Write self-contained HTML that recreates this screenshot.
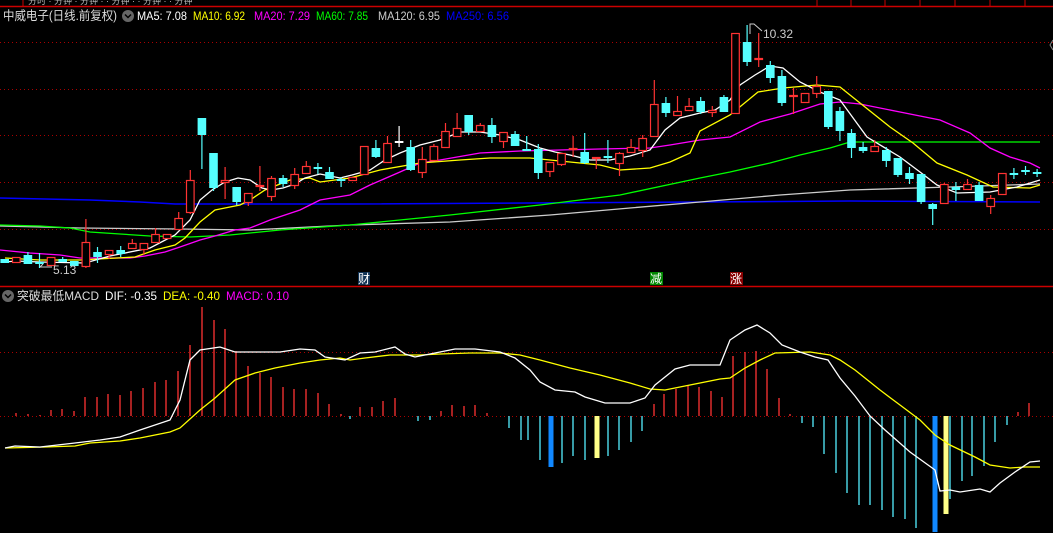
<!DOCTYPE html>
<html><head><meta charset="utf-8"><style>
html,body{margin:0;padding:0;background:#000;width:1053px;height:533px;overflow:hidden}
svg{display:block}
text{font-family:"Liberation Sans","Noto Sans CJK SC",sans-serif}
</style></head><body>
<svg id="s" width="1053" height="533" viewBox="0 0 1053 533" xmlns="http://www.w3.org/2000/svg">
<rect width="1053" height="533" fill="#000"/>
<g fill="#bbb" font-size="9"><text x="28" y="4">分时 · 分钟 · 分钟 · · 分钟 · · 分钟 · · 分钟</text></g>
<line x1="0" y1="6.5" x2="1053" y2="6.5" stroke="#c00" stroke-width="1.5"/>
<g stroke="#c00" stroke-width="1"><line x1="23" y1="0" x2="23" y2="6"/><line x1="817" y1="0" x2="817" y2="6"/><line x1="851" y1="0" x2="851" y2="6"/><line x1="885" y1="0" x2="885" y2="6"/><line x1="920" y1="0" x2="920" y2="6"/><line x1="955" y1="0" x2="955" y2="6"/><line x1="990" y1="0" x2="990" y2="6"/><line x1="1025" y1="0" x2="1025" y2="6"/></g>
<g stroke="#a00" stroke-width="1" stroke-dasharray="1,3">
<line x1="0" y1="42.5" x2="1053" y2="42.5"/><line x1="0" y1="89.5" x2="1053" y2="89.5"/><line x1="0" y1="135.5" x2="1053" y2="135.5"/><line x1="0" y1="182.5" x2="1053" y2="182.5"/><line x1="0" y1="229.5" x2="1053" y2="229.5"/>
<line x1="0" y1="352.5" x2="1053" y2="352.5"/><line x1="0" y1="416.5" x2="1053" y2="416.5"/>
</g>
<line x1="0" y1="286.5" x2="1053" y2="286.5" stroke="#c00" stroke-width="1.5"/>
<g id="ma"></g>
<g id="cd"></g>
<g id="mh"></g>
<g id="ml"></g>
<text x="3" y="20" font-size="12.5" fill="#ddd" textLength="114" lengthAdjust="spacingAndGlyphs">中威电子(日线.前复权)</text>
<circle cx="128" cy="16" r="6" fill="#666"/><path d="M125 14.5 L128 17.5 L131 14.5" stroke="#000" stroke-width="1.5" fill="none"/>
<g font-size="12">
<text x="137" y="20" fill="#fff" textLength="50" lengthAdjust="spacingAndGlyphs">MA5: 7.08</text>
<text x="193" y="20" fill="#ff0" textLength="52" lengthAdjust="spacingAndGlyphs">MA10: 6.92</text>
<text x="254" y="20" fill="#f0f" textLength="56" lengthAdjust="spacingAndGlyphs">MA20: 7.29</text>
<text x="316" y="20" fill="#0f0" textLength="52" lengthAdjust="spacingAndGlyphs">MA60: 7.85</text>
<text x="378" y="20" fill="#ccc" textLength="62" lengthAdjust="spacingAndGlyphs">MA120: 6.95</text>
<text x="446" y="20" fill="#00f" textLength="63" lengthAdjust="spacingAndGlyphs">MA250: 6.56</text>
</g>
<text x="763" y="38" font-size="12" fill="#ccc">10.32</text>
<path d="M750 34 V24 H754 L762 31" stroke="#ccc" fill="none"/>
<text x="53" y="274" font-size="12" fill="#ccc">5.13</text>
<path d="M40 267 H52 M40 267 L43 264" stroke="#ccc" fill="none"/>
<rect x="358" y="272" width="12" height="13" fill="#135"/><text x="358" y="283" font-size="12" fill="#fff">财</text>
<rect x="650" y="272" width="13" height="13" fill="#080"/><text x="650" y="283" font-size="12" fill="#fff">减</text>
<rect x="730" y="272" width="13" height="13" fill="#800"/><text x="730" y="283" font-size="12" fill="#fff">涨</text>
<circle cx="8" cy="296" r="6" fill="#666"/><path d="M5 294.5 L8 297.5 L11 294.5" stroke="#000" stroke-width="1.5" fill="none"/>
<g font-size="12"><text x="17" y="300" fill="#ddd" textLength="82" lengthAdjust="spacingAndGlyphs">突破最低MACD</text>
<text x="105" y="300" fill="#fff" textLength="52" lengthAdjust="spacingAndGlyphs">DIF: -0.35</text>
<text x="163" y="300" fill="#ff0" textLength="57" lengthAdjust="spacingAndGlyphs">DEA: -0.40</text>
<text x="226" y="300" fill="#f0f" textLength="63" lengthAdjust="spacingAndGlyphs">MACD: 0.10</text></g>
<path d="M1053 40 L1050 45 L1053 50" stroke="#888" fill="none"/>
</svg>
<script>
var NS="http://www.w3.org/2000/svg";
function el(p,t,a){var e=document.createElementNS(NS,t);for(var k in a)e.setAttribute(k,a[k]);document.getElementById(p).appendChild(e);return e;}
function pl(p,pts,c,w){el(p,"polyline",{points:pts.map(function(q){return q.join(",")}).join(" "),fill:"none",stroke:c,"stroke-width":w||1.2});}
pl("ma",[[0,198],[45,199],[90,200],[115,201],[140,202],[175,204],[350,204],[700,202],[850,201],[1040,202]],"#00f",1.5);
pl("ma",[[0,226],[80,228],[180,229],[250,230],[350,225],[450,222],[550,215],[630,208],[700,202],[780,195],[850,190],[950,187],[1040,184]],"#ccc",1.3);
pl("ma",[[0,225],[40,226],[70,228],[90,232],[120,234],[150,236],[190,237],[230,235],[280,230],[350,225],[450,215],[540,205],[620,195],[700,178],[730,172],[770,163],[800,155],[830,148],[850,142],[1040,142]],"#0f0",1.3);
pl("ma",[[0,250],[30,253],[60,255],[80,258],[130,258],[145,256],[165,252],[180,247],[200,240],[215,236],[235,230],[250,228],[270,220],[300,210],[320,200],[350,195],[370,185],[400,172],[420,163],[440,160],[480,153],[520,151],[560,150],[600,149],[650,148],[670,145],[700,140],[730,137],[760,122],[790,114],[820,104],[840,102],[860,104],[900,112],[940,120],[970,133],[990,148],[1010,157],[1030,163],[1040,168]],"#f0f",1.3);
pl("ma",[[5,258],[40,260],[80,260],[135,257],[155,250],[175,245],[185,238],[200,222],[215,210],[240,205],[250,200],[265,190],[290,180],[310,178],[320,182],[350,178],[380,170],[420,163],[460,160],[490,158],[530,158],[570,162],[600,165],[620,170],[650,168],[670,162],[690,153],[700,131],[730,115],[758,92],[783,88],[817,85],[840,87],[860,103],[890,127],[913,143],[937,163],[967,175],[993,187],[1030,188],[1040,185]],"#ff0",1.3);
pl("ma",[[5,262],[16,261],[40,262],[85,263],[110,256],[150,248],[175,235],[190,220],[200,200],[212,190],[225,182],[238,178],[250,180],[262,188],[271,190],[283,188],[295,184],[305,178],[320,174],[340,178],[352,175],[370,170],[385,160],[400,153],[420,145],[440,140],[460,132],[480,132],[500,135],[520,140],[540,148],[555,152],[570,155],[590,160],[610,160],[630,156],[650,150],[665,130],[680,118],[700,113],[715,110],[730,100],[740,85],[755,75],[770,66],[783,68],[800,82],[820,92],[840,100],[867,137],[900,157],[920,172],[937,185],[957,193],[990,192],[1017,187],[1040,180]],"#fff",1.3);
var C=[[0,'c',259,263],[1,'r',257,263],[2,'c',255,264,252,264],[3,'c',262,264,253,268],[4,'r',257,266],[5,'c',259,262,257,262],[6,'c',261,266],[7,'r',242,267,219,268],[8,'c',252,257,247,263],[9,'r',250,255,250,259],[10,'c',250,254,246,257],[11,'r',243,249,239,249],[12,'r',243,250,243,255],[13,'r',234,243,228,243],[14,'r',234,239],[15,'r',218,230,212,230],[16,'r',180,213,170,214],[17,'c',118,135,118,169],[18,'c',153,188,153,191],[19,'r',180,183,167,199],[20,'c',187,202,187,205],[21,'r',193,203,193,206],[22,'r',185,187,166,191],[23,'r',178,197,176,201],[24,'c',178,184,175,187],[25,'r',174,186,168,189],[26,'r',166,174,161,174],[27,'c',167,169,163,174],[28,'c',172,179,167,179],[29,'c',179,181,177,187],[30,'r',177,181],[31,'r',146,175],[32,'c',148,157,140,158],[33,'r',143,163,136,163],[34,'w',141,143,126,147],[35,'c',147,170,140,171],[36,'r',159,173,147,178],[37,'r',146,161,144,161],[38,'r',131,148,123,148],[39,'r',128,137,113,137],[40,'c',115,132,115,135],[41,'r',125,132,123,132],[42,'c',125,137,118,143],[43,'r',132,142,132,148],[44,'c',134,146,131,146],[45,'c',149,151,136,151],[46,'c',149,173,144,179],[47,'r',162,172,162,177],[48,'r',153,165,153,166],[49,'r',148,150,136,157],[50,'c',152,163,133,164],[51,'r',157,159,157,169],[52,'c',156,158,140,163],[53,'r',153,164,152,176],[54,'r',147,153,139,153],[55,'r',138,151,135,157],[56,'r',104,137,80,137],[57,'c',103,113,97,117],[58,'r',111,116,96,116],[59,'r',106,111,98,111],[60,'c',101,112,97,114],[61,'r',110,113,106,117],[62,'c',97,112,95,112],[63,'r',33,114],[64,'c',42,62,25,66],[65,'r',58,60,33,67],[66,'c',65,78,61,83],[67,'c',76,103,70,106],[68,'r',95,97,88,114],[69,'r',93,103],[70,'r',86,94,76,98],[71,'c',91,127,91,129],[72,'c',111,131,107,141],[73,'c',133,148,129,158],[74,'c',147,151,142,153],[75,'r',146,152,140,152],[76,'c',150,161,147,167],[77,'c',158,175,158,177],[78,'c',173,179,167,184],[79,'c',174,202,174,204],[80,'c',204,209,203,225],[81,'r',184,204,183,204],[82,'c',187,190,182,201],[83,'r',184,190,179,190],[84,'c',185,201,182,201],[85,'r',198,207,195,214],[86,'r',173,195],[87,'c',173,175,168,179],[88,'c',170,172,166,175],[89,'c',172,174,169,177]];
C.forEach(function(d){var x=4.7+11.6*d[0];var col=d[1]=='r'?'#f33':(d[1]=='w'?'#fff':'#5ff');var wt=d[4]||d[2],wb=d[5]||d[3];
el("cd","line",{x1:x,x2:x,y1:wt,y2:wb,stroke:col,"stroke-width":1.2});
if(d[1]=='r')el("cd","rect",{x:x-3.8,y:d[2]+0.5,width:7.6,height:Math.max(d[3]-d[2]-1,1),fill:"#000",stroke:col,"stroke-width":1.2});
else el("cd","rect",{x:x-4.3,y:d[2],width:8.6,height:Math.max(d[3]-d[2],1.5),fill:col});});
var H=[[16,413,'r'],[28,414,'r'],[40,415,'r'],[51,410,'r'],[62,409,'r'],[74,411,'r'],[85,397,'r'],[97,397,'r'],[108,394,'r'],[120,395,'r'],[131,391,'r'],[143,388,'r'],[155,382,'r'],[166,380,'r'],[178,371,'r'],[190,345,'r'],[202,307,'r'],[214,320,'r'],[225,329,'r'],[236,351,'r'],[248,366,'r'],[260,373,'r'],[271,377,'r'],[283,387,'r'],[294,389,'r'],[306,389,'r'],[318,393,'r'],[329,404,'r'],[341,414,'r'],[350,419,'c'],[360,407,'r'],[372,407,'r'],[383,401,'r'],[395,398,'r'],[418,421,'c'],[430,420,'c'],[441,411,'r'],[452,405,'r'],[464,406,'r'],[475,405,'r'],[487,413,'r'],[509,428,'c'],[521,440,'c'],[528,440,'c'],[540,460,'c'],[551,467,'b'],[562,463,'c'],[573,456,'c'],[585,460,'c'],[597,458,'y'],[608,456,'c'],[619,450,'c'],[631,442,'c'],[642,431,'c'],[654,404,'r'],[664,394,'r'],[676,389,'r'],[688,385,'r'],[699,387,'r'],[711,391,'r'],[722,397,'r'],[733,356,'r'],[745,352,'r'],[756,351,'r'],[767,369,'r'],[779,398,'r'],[790,414,'r'],[802,423,'c'],[813,427,'c'],[824,454,'c'],[836,473,'c'],[847,493,'c'],[859,505,'c'],[870,505,'c'],[882,510,'c'],[893,517,'c'],[905,519,'c'],[916,528,'c'],[935,532,'b'],[946,514,'y'],[950,499,'c'],[962,481,'c'],[972,476,'c'],[984,466,'c'],[995,442,'c'],[1007,425,'c'],[1018,412,'r'],[1029,403,'r']];
H.forEach(function(d){var c={r:'#f33',c:'#5ef',b:'#18f',y:'#ff8'}[d[2]];var w=(d[2]=='b'||d[2]=='y')?5:1.3;
var y1=Math.min(d[1],416),y2=Math.max(d[1],416);el("mh","rect",{x:d[0]-w/2,y:y1,width:w,height:y2-y1,fill:c});});
pl("ml",[[5,448],[45,447],[75,446],[90,443],[120,441],[140,438],[170,432],[180,428],[200,410],[215,398],[235,380],[255,373],[275,368],[300,363],[320,360],[340,358],[350,360],[365,358],[390,355],[420,355],[440,354],[470,353],[500,353],[520,355],[540,360],[570,368],[600,375],[630,383],[650,389],[665,390],[690,385],[720,379],[730,378],[745,368],[760,360],[775,353],[810,352],[830,355],[840,360],[855,370],[880,390],[900,405],[920,420],[935,435],[950,445],[975,457],[990,465],[1010,468],[1025,467],[1040,467]],"#ff0",1.3);
pl("ml",[[5,448],[15,446],[40,447],[75,443],[100,440],[120,437],[140,430],[170,420],[180,400],[190,360],[200,350],[220,347],[235,352],[265,352],[280,352],[300,349],[315,350],[325,357],[345,360],[360,353],[375,352],[395,347],[405,354],[415,357],[440,352],[455,349],[475,349],[500,352],[515,358],[530,370],[540,382],[555,390],[575,392],[585,397],[605,403],[630,403],[645,398],[655,385],[675,369],[690,365],[720,365],[730,340],[745,330],[757,325],[770,333],[782,345],[800,352],[815,357],[828,360],[840,378],[855,396],[870,416],[885,430],[910,452],[935,470],[940,491],[950,490],[960,492],[980,489],[990,492],[1000,483],[1015,472],[1030,462],[1040,461]],"#fff",1.3);
</script>
</body></html>
